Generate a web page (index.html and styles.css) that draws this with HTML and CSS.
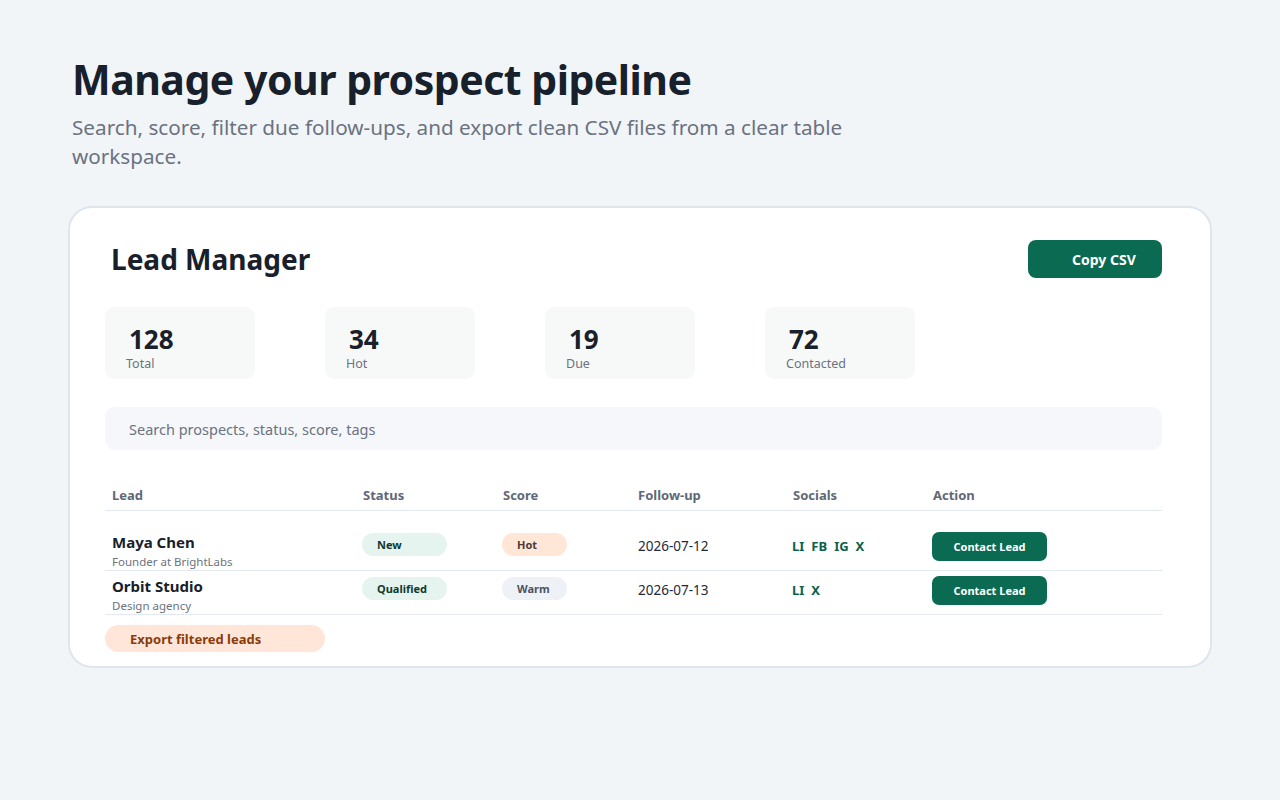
FILE: index.html
```html
<!DOCTYPE html>
<html lang="en">
<head>
<meta charset="utf-8">
<title>Lead Manager</title>
<link rel="stylesheet" href="styles.css">
</head>
<body>
<main class="page">
  <header class="hero">
    <h1 class="hero-title">Manage your prospect pipeline</h1>
    <p class="hero-sub">Search, score, filter due follow-ups, and export clean CSV files from a clear table workspace.</p>
  </header>

  <section class="card">
    <div class="card-head">
      <h2 class="card-title">Lead Manager</h2>
      <button class="btn-copy" type="button">Copy CSV</button>
    </div>

    <div class="stats">
      <div class="stat"><div class="stat-num">128</div><div class="stat-label">Total</div></div>
      <div class="stat"><div class="stat-num">34</div><div class="stat-label">Hot</div></div>
      <div class="stat"><div class="stat-num">19</div><div class="stat-label">Due</div></div>
      <div class="stat"><div class="stat-num">72</div><div class="stat-label">Contacted</div></div>
    </div>

    <div class="search"><input class="search-input" type="text" placeholder="Search prospects, status, score, tags"></div>

    <div class="table">
      <div class="row row-head">
        <div class="cell">Lead</div>
        <div class="cell">Status</div>
        <div class="cell">Score</div>
        <div class="cell">Follow-up</div>
        <div class="cell">Socials</div>
        <div class="cell">Action</div>
      </div>
      <div class="rows">
        <div class="row">
          <div class="cell"><div class="lead-name">Maya Chen</div><div class="lead-sub">Founder at BrightLabs</div></div>
          <div class="cell"><span class="badge badge-status">New</span></div>
          <div class="cell"><span class="badge badge-score badge-hot">Hot</span></div>
          <div class="cell date">2026-07-12</div>
          <div class="cell socials"><span>LI</span><span>FB</span><span>IG</span><span>X</span></div>
          <div class="cell"><button class="btn-contact" type="button">Contact Lead</button></div>
        </div>
        <div class="row">
          <div class="cell"><div class="lead-name">Orbit Studio</div><div class="lead-sub">Design agency</div></div>
          <div class="cell"><span class="badge badge-status">Qualified</span></div>
          <div class="cell"><span class="badge badge-score badge-warm">Warm</span></div>
          <div class="cell date">2026-07-13</div>
          <div class="cell socials"><span>LI</span><span>X</span></div>
          <div class="cell"><button class="btn-contact" type="button">Contact Lead</button></div>
        </div>
      </div>
    </div>

    <button class="btn-export" type="button">Export filtered leads</button>
  </section>
</main>
</body>
</html>
```

FILE: styles.css
```css
* { box-sizing: border-box; }

html, body {
  margin: 0;
  padding: 0;
  background: #f1f5f8;
  font-family: "Noto Sans", "Open Sans", sans-serif;
  color: #18202b;
}

.page {
  width: 1144px;
  margin: 0 auto;
  padding-top: 53px;
}

.hero {
  padding-left: 4px;
}

.hero-title {
  margin: 0;
  font-size: 41px;
  line-height: 52px;
  font-weight: 700;
  color: #17202b;
  letter-spacing: -0.5px;
}

.hero-sub {
  margin: 8px 0 0;
  max-width: 830px;
  font-size: 20.7px;
  line-height: 29px;
  color: #6b7280;
}

.card {
  margin-top: 35px;
  background: #ffffff;
  border: 2px solid #dfe5ec;
  border-radius: 24px;
  padding: 32px 48px 14px 35px;
}

.card-head {
  display: flex;
  align-items: center;
  justify-content: space-between;
  padding-left: 6px;
}

.card-title {
  margin: 0;
  font-size: 28px;
  line-height: 38px;
  font-weight: 700;
  color: #17202b;
}

.btn-copy {
  width: 134px;
  height: 38px;
  border: 0;
  border-radius: 8px;
  background: #0b6b52;
  color: #ffffff;
  font-family: inherit;
  font-size: 14px;
  font-weight: 700;
  padding: 0 16px 0 44px;
  text-align: left;
}

.stats {
  margin-top: 29px;
  display: grid;
  grid-template-columns: repeat(4, 150px);
  column-gap: 70px;
}

.stat {
  height: 72px;
  background: #f7f9f9;
  border-radius: 9px;
  padding: 18px 21px 0;
}

.stat-num {
  font-size: 26px;
  line-height: 28px;
  font-weight: 700;
  color: #17202b;
  padding-left: 3px;
}

.stat-label {
  margin-top: 2px;
  font-size: 12.5px;
  line-height: 17px;
  color: #6b7280;
}

.search {
  margin-top: 28px;
}

.search-input {
  display: block;
  width: 100%;
  height: 43px;
  border: 0;
  border-radius: 10px;
  background: #f5f7fa;
  padding: 0 24px;
  font-family: inherit;
  font-size: 14.5px;
  color: #18202b;
  outline: none;
}

.search-input::placeholder {
  color: #6b7280;
  opacity: 1;
}

.table {
  margin-top: 26px;
}

.row {
  display: grid;
  grid-template-columns: 250px 140px 135px 155px 140px 1fr;
  align-items: start;
  border-bottom: 1px solid #e2e8f0;
  padding-top: 5px;
}

.row-head {
  padding: 10px 0 6px;
  align-items: center;
}

.row-head .cell {
  font-size: 13px;
  line-height: 18px;
  font-weight: 700;
  color: #5f6876;
}

.rows {
  padding-top: 16px;
}

.cell {
  padding: 0 8px;
}

.row .cell:first-child {
  padding-left: 7px;
}

.lead-name {
  font-size: 15px;
  line-height: 21px;
  font-weight: 700;
  color: #17202b;
}

.lead-sub {
  font-size: 11.5px;
  line-height: 17px;
  color: #6b7280;
}

.badge {
  display: inline-block;
  height: 23px;
  line-height: 23px;
  border-radius: 12px;
  padding-left: 15px;
  font-size: 11px;
  font-weight: 700;
  margin-top: 1px;
  margin-left: -1px;
}

.badge-status {
  width: 85px;
  background: #e6f4ef;
  color: #113a2f;
}

.badge-score {
  width: 65px;
}

.badge-hot {
  background: #ffe6d7;
  color: #4a3b38;
}

.badge-warm {
  background: #eef1f5;
  color: #4a5463;
}

.date {
  font-size: 13.5px;
  line-height: 29px;
  color: #1f2937;
}

.socials {
  display: flex;
  gap: 7px;
  font-size: 13px;
  line-height: 29px;
  font-weight: 700;
  color: #0b6149;
  padding-left: 7px;
}

.btn-contact {
  width: 115px;
  height: 29px;
  margin-left: -1px;
  border: 0;
  border-radius: 7px;
  background: #0b6b52;
  color: #ffffff;
  font-family: inherit;
  font-size: 11px;
  font-weight: 700;
  padding: 0;
}

.btn-export {
  display: block;
  margin-top: 10px;
  margin-left: 0;
  width: 220px;
  height: 27px;
  border: 0;
  border-radius: 14px;
  background: #ffe6d8;
  color: #8a3b0c;
  font-family: inherit;
  font-size: 13px;
  font-weight: 700;
  text-align: left;
  padding: 0 0 0 25px;
}
```
